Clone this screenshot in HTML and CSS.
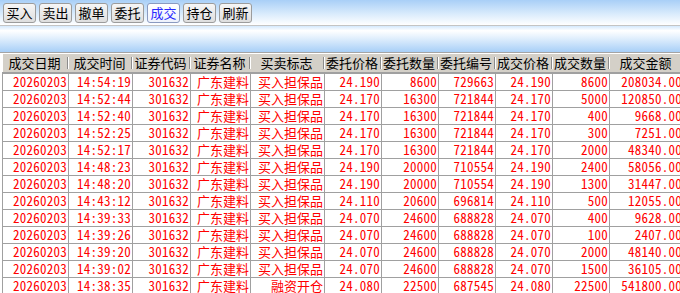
FILE: index.html
```html
<!DOCTYPE html>
<html lang="zh-CN">
<head>
    <meta charset="UTF-8">
    <title>成交查询</title>
    <link rel="stylesheet" href="styles.css">
</head>
<body>

    <div class="toolbar">
        <button class="tool-btn">买入</button>
        <button class="tool-btn">卖出</button>
        <button class="tool-btn">撤单</button>
        <button class="tool-btn">委托</button>
        <button class="tool-btn active">成交</button>
        <button class="tool-btn">持仓</button>
        <button class="tool-btn">刷新</button>
    </div>

    <div class="band"></div>

    <table class="grid">
        <colgroup>
            <col style="width:66px"><col style="width:64px"><col style="width:58px">
            <col style="width:60px"><col style="width:74px"><col style="width:57px">
            <col style="width:57px"><col style="width:57px"><col style="width:57px">
            <col style="width:57px"><col style="width:74px">
        </colgroup>
        <thead>
            <tr>
                <th>成交日期</th>
                <th>成交时间</th>
                <th>证券代码</th>
                <th>证券名称</th>
                <th>买卖标志</th>
                <th>委托价格</th>
                <th>委托数量</th>
                <th>委托编号</th>
                <th>成交价格</th>
                <th>成交数量</th>
                <th>成交金额</th>
            </tr>
        </thead>
        <tbody id="deal-rows"></tbody>
    </table>

    <script>
        // 成交记录
        const deals = [
            ['14:54:19', '买入担保品', '24.190', '8600', '729663', '24.190', '8600', '208034.00'],
            ['14:52:44', '买入担保品', '24.170', '16300', '721844', '24.170', '5000', '120850.00'],
            ['14:52:40', '买入担保品', '24.170', '16300', '721844', '24.170', '400', '9668.00'],
            ['14:52:25', '买入担保品', '24.170', '16300', '721844', '24.170', '300', '7251.00'],
            ['14:52:17', '买入担保品', '24.170', '16300', '721844', '24.170', '2000', '48340.00'],
            ['14:48:23', '买入担保品', '24.190', '20000', '710554', '24.190', '2400', '58056.00'],
            ['14:48:20', '买入担保品', '24.190', '20000', '710554', '24.190', '1300', '31447.00'],
            ['14:43:12', '买入担保品', '24.110', '20600', '696814', '24.110', '500', '12055.00'],
            ['14:39:33', '买入担保品', '24.070', '24600', '688828', '24.070', '400', '9628.00'],
            ['14:39:26', '买入担保品', '24.070', '24600', '688828', '24.070', '100', '2407.00'],
            ['14:39:20', '买入担保品', '24.070', '24600', '688828', '24.070', '2000', '48140.00'],
            ['14:39:02', '买入担保品', '24.070', '24600', '688828', '24.070', '1500', '36105.00'],
            ['14:38:35', '融资开仓', '24.080', '22500', '687545', '24.080', '22500', '541800.00']
        ];

        const body = document.getElementById('deal-rows');
        deals.forEach(d => {
            const rowHTML = `
              <tr>
                <td>20260203</td>
                <td>${d[0]}</td>
                <td>301632</td>
                <td class="cn">广东建料</td>
                <td class="cn">${d[1]}</td>
                <td>${d[2]}</td>
                <td>${d[3]}</td>
                <td>${d[4]}</td>
                <td>${d[5]}</td>
                <td>${d[6]}</td>
                <td>${d[7]}</td>
              </tr>
            `;
            body.insertAdjacentHTML('beforeend', rowHTML);
        });
    </script>

</body>
</html>
```

FILE: styles.css
```css
body {
    margin: 0;
    background-color: #fff;
    font-family: "Noto Sans CJK SC", sans-serif;
    font-size: 13px;
    overflow: hidden;
}

.toolbar {
    height: 26px;
    box-sizing: border-box;
    padding: 3px 3px 0;
    display: flex;
    gap: 3px;
    background: linear-gradient(#a9cff7, #d9ebfc 55%, #ffffff);
    border-bottom: 1px solid #c4c4c4;
}

.tool-btn {
    width: 33px;
    height: 20px;
    padding: 0;
    border: 1px solid #9c9c9c;
    border-radius: 3px;
    background: linear-gradient(#f6f6f6, #dedede);
    color: #000;
    font-family: "Noto Sans CJK SC", sans-serif;
    font-size: 13px;
    line-height: 18px;
    cursor: pointer;
}

.tool-btn.active {
    background: linear-gradient(#ffffff, #eef2fb);
    border-color: #8a9ac0;
    color: #2828ff;
}

.band {
    height: 26px;
    background: linear-gradient(#d4e9fd, #ffffff 18%, #e3f0fd 45%, #a8cff7);
    border-bottom: 1px solid #a4a4a4;
}

.grid {
    margin: 0 0 0 2px;
    border-collapse: collapse;
    table-layout: fixed;
    width: 681px;
}

.grid th {
    height: 18px;
    padding: 0 2px 0 0;
    background-color: #d4d0c8;
    background-image: linear-gradient(#8c8c8c, #8c8c8c), linear-gradient(#fff, #fff);
    background-size: 1px 12px, 1px 12px;
    background-position: right 1px center, right 0 center;
    background-repeat: no-repeat;
    border-top: 1px solid #fff;
    border-bottom: 1px solid #fff;
    font-weight: normal;
    color: #000;
    text-align: center;
    white-space: nowrap;
    line-height: 16px;
}

.grid tbody tr:first-child td {
    border-top: 2px solid #a0a0a0;
}

.grid td {
    height: 16px;
    padding: 0 1px 0 0;
    border: 1px solid #a0a0a0;
    color: #ff0000;
    text-align: right;
    white-space: nowrap;
    overflow: hidden;
    font-family: "Noto Sans Mono CJK SC", "Liberation Mono", monospace;
    font-size: 13px;
    letter-spacing: 0.25px;
    line-height: 16px;
}

.grid td.cn {
    font-family: "Noto Sans CJK SC", sans-serif;
    letter-spacing: 0;
}
```
